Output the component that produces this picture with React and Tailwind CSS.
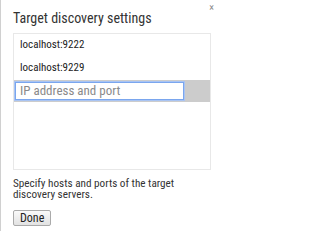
import React from "react";

const hosts = ["localhost:9222", "localhost:9229"];

export default function App() {
  return (
    <div className="relative w-[218px] h-[231px] bg-white border-l border-[#d0d0d0] overflow-hidden text-[#222] font-['Roboto_Condensed','Liberation_Sans',sans-serif]">
      <button className="absolute right-[4px] top-[3px] text-[10px] leading-none text-[#888]">
        ×
      </button>
      <div className="pl-[12px] pr-[7px] pt-[9px]">
        <h1 className="text-[14px] leading-[18px] font-normal text-[#333]">
          Target discovery settings
        </h1>
        <div className="mt-[6px] h-[137px] border border-[#e8e8e8] flex flex-col">
          {hosts.map((h) => (
            <div key={h} className="h-[23px] flex items-center pl-[6px] text-[11px] text-[#222]">
              {h}
            </div>
          ))}
          <div className="h-[22px] bg-[#cccccc] flex items-center pl-[1px]">
            <input
              className="w-[169px] h-[18px] border border-[#7aa6ee] bg-white outline outline-1 outline-[#a9c4f3] pl-[4px] pr-[3px] text-[13px] placeholder:text-[#8a8a8a]"
              placeholder="IP address and port"
            />
          </div>
        </div>
        <p className="mt-[8px] text-[11.2px] leading-[11px] text-[#333]">
          Specify hosts and ports of the target discovery servers.
        </p>
        <button className="mt-[10px] h-[16px] px-[6px] border border-[#aaa] rounded-[2px] bg-gradient-to-b from-[#fafafa] to-[#e2e2e2] text-[12px] leading-none text-[#222]">
          Done
        </button>
      </div>
    </div>
  );
}
